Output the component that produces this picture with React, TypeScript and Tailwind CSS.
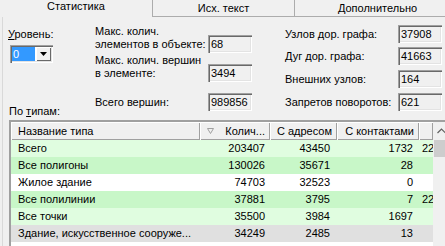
import React from "react";

const box =
  "w-[44px] h-[18px] bg-[#f0f0f0] pl-[3px] pt-[2px] leading-[15px] shadow-[inset_1px_1px_0_#a0a0a0,inset_2px_2px_0_#696969,inset_-1px_-1px_0_#ffffff,inset_-2px_-2px_0_#e3e3e3]";

function TextBox({ v }: { v: string }) {
  return <div className={box + " shrink-0"}>{v}</div>;
}

const rows: { n: string; a: string; b: string; c: string; d: string; bg: string }[] = [
  { n: "Всего", a: "203407", b: "43450", c: "1732", d: "22", bg: "bg-[#e0fde0]" },
  { n: "Все полигоны", a: "130026", b: "35671", c: "28", d: "", bg: "bg-[#c8f7c8]" },
  { n: "Жилое здание", a: "74703", b: "32523", c: "0", d: "", bg: "bg-white" },
  { n: "Все полилинии", a: "37881", b: "3795", c: "7", d: "22", bg: "bg-[#c8f7c8]" },
  { n: "Все точки", a: "35500", b: "3984", c: "1697", d: "", bg: "bg-[#e0fde0]" },
  { n: "Здание, искусственное сооруже...", a: "34249", b: "2485", c: "13", d: "", bg: "bg-[#e0e0e0]" },
  { n: "", a: "", b: "", c: "", d: "", bg: "bg-white" },
];

const hcell =
  "h-[18px] shrink-0 bg-[#f0f0f0] shadow-[inset_1px_1px_0_#ffffff,inset_-1px_-1px_0_#a0a0a0] leading-[18px] overflow-hidden whitespace-nowrap";

export default function App() {
  return (
    <div className="w-[445px] h-[246px] overflow-hidden bg-[#f0f0f0] font-['Liberation_Sans',Arial,sans-serif] text-[11px] leading-[13px] text-black flex flex-col">
      {/* Tabs */}
      <div className="flex h-[17px] shrink-0">
        <div className="w-[152px] shrink-0 flex justify-center">Статистика</div>
        <div className="w-[142px] shrink-0 border-l border-b border-[#acacac] flex justify-center pt-[2px]">
          Исх. текст
        </div>
        <div className="w-[166px] shrink-0 border-l border-b border-[#acacac] flex justify-center pt-[2px]">
          Дополнительно
        </div>
      </div>

      {/* Page */}
      <div className="flex-1 ml-[2px] border-l border-[#d9d9d9] flex flex-col min-h-0">
        <div className="flex h-[103px] shrink-0 pl-[5px]">
          {/* left */}
          <div className="w-[87px] shrink-0 flex flex-col">
            <div className="mt-[11px]">
              <span className="underline">У</span>ровень:
            </div>
            <div className="mt-[4px] ml-[2px] w-[43px] h-[18px] bg-white flex p-[2px] shadow-[inset_1px_1px_0_#a0a0a0,inset_2px_2px_0_#696969,inset_-1px_-1px_0_#ffffff,inset_-2px_-2px_0_#e3e3e3]">
              <div className="w-[23px] h-[14px] bg-[#3399ff] text-white leading-[14px] pl-[1px]">0</div>
              <div className="ml-[1px] w-[15px] h-[14px] bg-[#f0f0f0] flex items-center justify-center shadow-[inset_1px_1px_0_#ffffff,inset_-1px_-1px_0_#696969]">
                <svg width="7" height="4" viewBox="0 0 7 4">
                  <path d="M0 0 H7 L3.5 4 Z" fill="#000" />
                </svg>
              </div>
            </div>
            <div className="mt-auto mb-[2px] ml-[1px]">
              По <span className="underline">т</span>ипам:
            </div>
          </div>

          {/* middle */}
          <div className="w-[157px] shrink-0 flex flex-col">
            <div className="flex items-start mt-[8px]">
              <div className="w-[113px] shrink-0">
                Макс. колич.
                <br />
                элементов в объекте:
              </div>
              <div className="mt-[10px]">
                <TextBox v="68" />
              </div>
            </div>
            <div className="flex items-start mt-[1px]">
              <div className="w-[113px] shrink-0">
                Макс. колич. вершин
                <br />в элементе:
              </div>
              <div className="mt-[10px]">
                <TextBox v="3494" />
              </div>
            </div>
            <div className="flex items-center mt-[11px]">
              <div className="w-[113px] shrink-0">Всего вершин:</div>
              <TextBox v="989856" />
            </div>
          </div>

          {/* right */}
          <div className="ml-[33px] w-[157px] shrink-0 flex flex-col">
            <div className="flex items-center mt-[8px]">
              <div className="w-[113px] shrink-0">Узлов дор. графа:</div>
              <TextBox v="37908" />
            </div>
            <div className="flex items-center mt-[4px]">
              <div className="w-[113px] shrink-0">Дуг дор. графа:</div>
              <TextBox v="41663" />
            </div>
            <div className="flex items-center mt-[5px]">
              <div className="w-[113px] shrink-0">Внешних узлов:</div>
              <TextBox v="164" />
            </div>
            <div className="flex items-center mt-[5px]">
              <div className="w-[113px] shrink-0">Запретов поворотов:</div>
              <TextBox v="621" />
            </div>
          </div>
        </div>

        {/* Table */}
        <div className="ml-[6px] w-[460px] flex-1 flex border-l-2 border-t-2 border-l-[#a0a0a0] border-t-[#a0a0a0] bg-white min-h-0">
          <div className="w-[422px] shrink-0 flex flex-col">
            <div className="flex">
              <div className={hcell + " w-[189px] pl-[7px]"}>Название типа</div>
              <div className={hcell + " w-[70px] relative text-right pr-[5px]"}>
                <svg className="absolute left-[7px] top-[6px]" width="7" height="6" viewBox="0 0 7 6">
                  <path d="M0.5 0.5 H6.5 L3.5 5.5 Z" fill="none" stroke="#a0a0a0" strokeWidth="1" />
                </svg>
                Колич...
              </div>
              <div className={hcell + " w-[67px] text-right pr-[5px]"}>С адресом</div>
              <div className={hcell + " w-[82px] text-right pr-[5px]"}>С контактами</div>
              <div className={hcell + " w-[14px]"}></div>
            </div>
            {rows.map((r, i) => (
              <div key={i} className={"flex h-[17px] leading-[17px] shrink-0 whitespace-nowrap " + r.bg}>
                <div className="w-[189px] shrink-0 pl-[7px] overflow-hidden">{r.n}</div>
                <div className="w-[70px] shrink-0 text-right pr-[5px]">{r.a}</div>
                <div className="w-[67px] shrink-0 text-right pr-[7px]">{r.b}</div>
                <div className="w-[82px] shrink-0 text-right pr-[6px]">{r.c}</div>
                <div className="w-[14px] shrink-0 pl-[3px] overflow-hidden">{r.d}</div>
              </div>
            ))}
          </div>
          {/* scrollbar */}
          <div className="w-[17px] shrink-0 bg-[#f0f0f0] flex flex-col">
            <div className="h-[18px] flex items-center justify-center">
              <svg width="9" height="6" viewBox="0 0 9 6">
                <path d="M0.5 5 L4.5 1 L8.5 5" fill="none" stroke="#606060" strokeWidth="1.2" />
              </svg>
            </div>
            <div className="mx-[1px] h-[17px] bg-[#cdcdcd]"></div>
          </div>
        </div>
      </div>
    </div>
  );
}
